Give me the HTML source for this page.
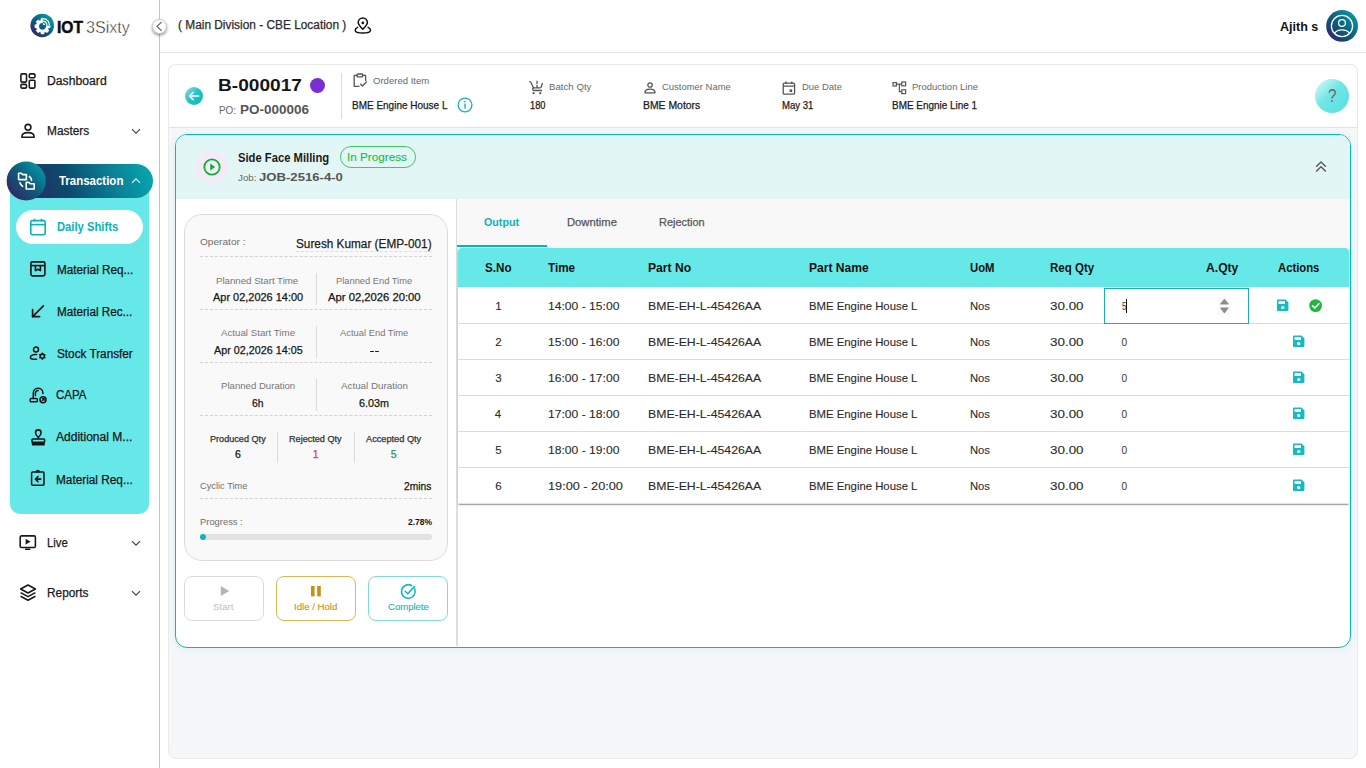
<!DOCTYPE html>
<html><head><meta charset="utf-8">
<style>
*{box-sizing:border-box;margin:0;padding:0}
html,body{width:1366px;height:768px;overflow:hidden;background:#fff;font-family:"Liberation Sans",sans-serif;color:#1a1a1a}
.a{position:absolute}
.t{position:absolute;white-space:nowrap;line-height:1;transform-origin:0 0}
svg.i{position:absolute;overflow:visible}
.dash{position:absolute;height:0;border-top:1px dashed #d2d2d2}
.vd{position:absolute;width:1px;background:#dadada}
.row{position:absolute;left:458px;width:891px;height:36px;border-bottom:1px solid #dcdcdc;background:#fff}
.sv{position:absolute;width:12px;height:12px}
</style></head>
<body>
<!-- ===== SIDEBAR ===== -->
<div class="a" style="left:159px;top:0;width:1px;height:768px;background:#c4c4c4"></div>
<div class="a" style="left:160px;top:52px;width:1206px;height:1px;background:#e4e4e4"></div>
<!-- logo -->
<svg class="i" style="left:0;top:0" width="160" height="52" viewBox="0 0 160 52">
 <defs><linearGradient id="lg1" gradientUnits="userSpaceOnUse" x1="52" y1="14" x2="33" y2="37"><stop offset="0" stop-color="#0aa7ad"/><stop offset="0.5" stop-color="#0b6282"/><stop offset="1" stop-color="#3e1a5e"/></linearGradient></defs>
 <circle cx="42.2" cy="25.5" r="11.8" fill="url(#lg1)"/>
 <path d="M48.07 24.07 L50.36 24.79 L50.36 27.81 L48.07 28.53 L48.01 28.67 L49.12 30.79 L46.99 32.92 L44.87 31.81 L44.73 31.87 L44.01 34.16 L40.99 34.16 L40.27 31.87 L40.13 31.81 L38.01 32.92 L35.88 30.79 L36.99 28.67 L36.93 28.53 L34.64 27.81 L34.64 24.79 L36.93 24.07 L36.99 23.93 L35.88 21.81 L38.01 19.68 L40.13 20.79 L40.27 20.73 L40.99 18.44 L44.01 18.44 L44.73 20.73 L44.87 20.79 L46.99 19.68 L49.12 21.81 L48.01 23.93Z" fill="#fff"/>
 <circle cx="42.5" cy="26.3" r="3.4" fill="#0b6282"/>
 <clipPath id="cp1"><circle cx="42.2" cy="25.5" r="11.6"/></clipPath><rect x="42.6" y="16" width="9.6" height="9.4" fill="url(#lg1)" clip-path="url(#cp1)"/>
 <g fill="none" stroke="#fff" stroke-width="1.25">
  <path d="M43 18.6 a6.4 6.4 0 0 1 6.4 6.4"/><path d="M43 21.2 a3.8 3.8 0 0 1 3.8 3.8"/>
 </g>
 <path d="M43 25 L43 23 A2 2 0 0 1 45 25z" fill="#fff"/>
 <rect x="41.3" y="17.8" width="1.3" height="5" fill="#fff"/>
</svg>
<!-- collapse btn -->
<div class="a" style="left:151.6px;top:18.6px;width:15px;height:15px;border-radius:50%;background:#fff;border:1px solid #c9c9c9;box-shadow:0 1.5px 3px rgba(0,0,0,.4)"></div>
<svg class="i" style="left:151.6px;top:18.6px" width="15" height="15" viewBox="0 0 15 15"><path d="M9.2 3.4 L5 7.4 L9.2 11.4" fill="none" stroke="#4a6680" stroke-width="1.3" stroke-linecap="round" stroke-linejoin="round"/></svg>
<!-- location icon -->
<svg class="i" style="left:354px;top:17px" width="18" height="18" viewBox="0 0 18 18">
 <g fill="none" stroke="#111" stroke-width="1.5" stroke-linecap="round" stroke-linejoin="round">
  <path d="M8.8 12.3 C6 9.6 4.2 7.6 4.2 5.6 A4.6 4.6 0 0 1 13.4 5.6 C13.4 7.6 11.6 9.6 8.8 12.3z"/>
  <path d="M3.6 10.4 C1.8 11.1 1.2 12.2 1.2 13.2 C1.2 15 4.6 16 8.8 16 C13 16 16.5 15 16.5 13.2 C16.5 12.2 15.9 11.1 14.1 10.4"/>
 </g>
 <circle cx="8.8" cy="5.9" r="1.3" fill="#111"/>
</svg>
<!-- avatar -->
<svg class="i" style="left:1326px;top:10px" width="32" height="32" viewBox="0 0 32 32">
 <defs><linearGradient id="lg2" x1="1" y1="0" x2="0" y2="1"><stop offset="0" stop-color="#0aa7ad"/><stop offset="0.55" stop-color="#0b5a7c"/><stop offset="1" stop-color="#3e1a5e"/></linearGradient></defs>
 <circle cx="16.1" cy="15.9" r="15.9" fill="url(#lg2)"/>
 <g fill="none" stroke="#fff" stroke-width="1.3">
  <circle cx="16" cy="16" r="10.6"/>
  <circle cx="16" cy="13" r="3.4"/>
  <path d="M8.4 23.4 C10 21 12.8 19.8 16 19.8 C19.2 19.8 22 21 23.6 23.4"/>
 </g>
</svg>

<!-- sidebar icons -->
<svg class="i" style="left:20px;top:73px" width="16" height="16" viewBox="0 0 16 16">
 <g fill="none" stroke="#1a1a1a" stroke-width="1.6">
  <rect x="0.9" y="0.9" width="5.6" height="8.2" rx="1"/><rect x="0.9" y="11.4" width="5.6" height="3.7" rx="1"/>
  <rect x="9.3" y="0.9" width="5.6" height="3.9" rx="1"/><rect x="9.3" y="7.2" width="5.6" height="7.9" rx="1"/>
 </g>
</svg>
<svg class="i" style="left:20px;top:123px" width="16" height="16" viewBox="0 0 16 16">
 <g fill="none" stroke="#1a1a1a" stroke-width="1.6">
  <circle cx="8" cy="4.3" r="2.9"/>
  <path d="M1.9 13.6 C1.9 10.9 4.6 9.6 8 9.6 C11.4 9.6 14.1 10.9 14.1 13.6 L14.1 14.2 L1.9 14.2z" stroke-linejoin="round"/>
 </g>
</svg>
<svg class="i" style="left:131px;top:128px" width="10" height="7" viewBox="0 0 10 7"><path d="M1 1.2 L5 5.2 L9 1.2" fill="none" stroke="#444" stroke-width="1.2"/></svg>
<!-- teal panel -->
<div class="a" style="left:10px;top:180px;width:139px;height:334px;background:#67e8e8;border-radius:0 0 10px 10px"></div>
<!-- transaction pill -->
<div class="a" style="left:10px;top:164px;width:143px;height:34px;border-radius:17px;background:linear-gradient(70deg,#3a1e5c 0%,#0b4a6e 40%,#0a7f95 70%,#07aab0 100%)"></div>
<svg class="i" style="left:6px;top:161px" width="40" height="40" viewBox="0 0 40 40">
 <defs><linearGradient id="lg3" x1="1" y1="0" x2="0" y2="1"><stop offset="0" stop-color="#06aab0"/><stop offset="0.45" stop-color="#0b6282"/><stop offset="1" stop-color="#3a1a5a"/></linearGradient></defs>
 <circle cx="20.2" cy="20" r="19.6" fill="url(#lg3)"/>
 <g fill="none" stroke="#fff" stroke-width="1.6" stroke-linejoin="round">
  <path d="M12.6 12.2 L15.4 12.2 L16.6 13.6 L20.4 13.6 L20.4 18.6 L12.6 18.6z"/>
  <path d="M20.2 21.4 L23 21.4 L24.2 22.8 L28.2 22.8 L28.2 28 L20.2 28z"/>
  <path d="M23.4 15.4 A6 6 0 0 1 25.6 19.4" stroke-linecap="round"/>
  <path d="M14 21.8 A6 6 0 0 0 16.6 25.4" stroke-linecap="round"/>
 </g>
</svg>
<svg class="i" style="left:131px;top:177px" width="10" height="7" viewBox="0 0 10 7"><path d="M1 5.8 L5 1.8 L9 5.8" fill="none" stroke="#d8f4f6" stroke-width="1.2"/></svg>
<!-- daily shifts pill -->
<div class="a" style="left:16px;top:210px;width:127px;height:34px;border-radius:17px;background:#fff"></div>
<svg class="i" style="left:29px;top:218px" width="18" height="18" viewBox="0 0 18 18">
 <g fill="none" stroke="#08b3bb" stroke-width="1.6">
  <rect x="1.8" y="2.6" width="14.4" height="14.2" rx="1.6"/><path d="M1.8 6.6 L16.2 6.6"/><path d="M5.6 0.8 L5.6 3.6 M12.4 0.8 L12.4 3.6"/>
 </g>
</svg>
<!-- sub icons -->
<svg class="i" style="left:30px;top:261px" width="16" height="16" viewBox="0 0 16 16">
 <g fill="none" stroke="#151515" stroke-width="1.6" stroke-linejoin="round">
  <rect x="0.9" y="0.9" width="14" height="14" rx="1.6"/><path d="M0.9 4.6 L14.9 4.6"/><path d="M5.4 4.6 L5.4 9.6 L7.9 8.2 L10.4 9.6 L10.4 4.6"/>
 </g>
</svg>
<svg class="i" style="left:31px;top:305px" width="14" height="13" viewBox="0 0 14 13">
 <g fill="none" stroke="#151515" stroke-width="1.7" stroke-linecap="round" stroke-linejoin="round">
  <path d="M12.4 0.9 L1.6 11.6"/><path d="M1.6 4.6 L1.6 11.6 L8.6 11.6"/>
 </g>
</svg>
<svg class="i" style="left:29px;top:346px" width="18" height="15" viewBox="0 0 18 15">
 <g fill="none" stroke="#151515" stroke-width="1.5" stroke-linecap="round" stroke-linejoin="round">
  <circle cx="7" cy="3.6" r="2.5"/><path d="M7.6 8.5 L6 8.5 Q1.4 9.2 1.4 11.2 Q1.4 13.2 4.4 13.2 L7.6 13.2"/>
 </g>
 <path d="M13.30 6.20 L14.65 7.86 L16.76 8.20 L16.00 10.20 L16.76 12.20 L14.65 12.54 L13.30 14.20 L11.95 12.54 L9.84 12.20 L10.60 10.20 L9.84 8.20 L11.95 7.86Z M14.60 10.20 A1.3 1.3 0 1 0 12.00 10.20 A1.3 1.3 0 1 0 14.60 10.20Z" fill="#151515" fill-rule="evenodd"/>
</svg>
<svg class="i" style="left:29px;top:387px" width="19" height="17" viewBox="0 0 19 17">
 <g fill="none" stroke="#151515" stroke-width="1.5" stroke-linecap="round" stroke-linejoin="round">
  <path d="M4.3 11 L4.3 6 A4.8 4.8 0 0 1 13.9 6 L13.9 6.4"/><path d="M6.4 8.6 L6.4 6.2 A2.7 2.7 0 0 1 9.1 3.5"/>
  <rect x="1.2" y="11.5" width="7.1" height="3.2" rx="0.8"/>
  <circle cx="14" cy="12.8" r="3"/>
 </g>
 <path d="M12.7 14.1 L15.2 11.6 M13.3 11.6 L15.2 11.6 L15.2 13.5" fill="none" stroke="#151515" stroke-width="1.1" stroke-linecap="round"/>
</svg>
<svg class="i" style="left:31px;top:429px" width="15" height="17" viewBox="0 0 15 17">
 <g fill="none" stroke="#151515" stroke-width="1.6" stroke-linejoin="round">
  <path d="M7.3 8.4 C3.4 5.4 3.8 0.9 7.3 0.9 C10.8 0.9 11.2 5.4 7.3 8.4z"/><path d="M7.3 8.4 L7.3 9.6"/><rect x="1" y="10" width="12.6" height="3.4" rx="0.8"/>
 </g>
 <rect x="0.8" y="14" width="13" height="2.4" rx="0.6" fill="#151515"/>
</svg>
<svg class="i" style="left:30px;top:469px" width="16" height="18" viewBox="0 0 16 18">
 <g fill="none" stroke="#151515" stroke-width="1.5" stroke-linejoin="round" stroke-linecap="round">
  <rect x="1.6" y="2.9" width="12.4" height="13.3" rx="1"/><path d="M6.5 2.9 A1.3 1.3 0 0 1 9.1 2.9"/>
  <path d="M10.8 10.1 L5.6 10.1 M8 7.6 L5.4 10.1 L8 12.6" stroke-width="1.6"/>
 </g>
</svg>
<!-- live / reports -->
<svg class="i" style="left:19px;top:535px" width="18" height="16" viewBox="0 0 18 16">
 <rect x="1.2" y="0.9" width="15.2" height="11.6" rx="1.3" fill="none" stroke="#1a1a1a" stroke-width="1.6"/>
 <path d="M6.6 3.8 L11.6 6.7 L6.6 9.6z" fill="#1a1a1a"/><rect x="6" y="13.4" width="5.4" height="1.7" rx="0.5" fill="#1a1a1a"/>
</svg>
<svg class="i" style="left:131px;top:540px" width="10" height="7" viewBox="0 0 10 7"><path d="M1 1.2 L5 5.2 L9 1.2" fill="none" stroke="#444" stroke-width="1.2"/></svg>
<svg class="i" style="left:19px;top:584px" width="18" height="18" viewBox="0 0 18 18">
 <g fill="none" stroke="#1a1a1a" stroke-width="1.6" stroke-linejoin="round">
  <path d="M9 1 L16.4 5 L9 9 L1.6 5z"/><path d="M1.6 8.6 L9 12.6 L16.4 8.6"/><path d="M1.6 12.2 L9 16.2 L16.4 12.2"/>
 </g>
</svg>
<svg class="i" style="left:131px;top:590px" width="10" height="7" viewBox="0 0 10 7"><path d="M1 1.2 L5 5.2 L9 1.2" fill="none" stroke="#444" stroke-width="1.2"/></svg>

<!-- ===== MAIN ===== -->
<div class="a" style="left:168px;top:64px;width:1190px;height:695px;background:#f5f7f9;border:1px solid #eaeaea;border-radius:8px"></div>
<div class="a" style="left:168px;top:64px;width:1190px;height:64px;background:#fff;border:1px solid #eaeaea;border-bottom-color:#e2e2e2;border-radius:8px 8px 0 0"></div>
<!-- back -->
<svg class="i" style="left:184px;top:86px" width="20" height="20" viewBox="0 0 20 20">
 <defs><linearGradient id="lg4" x1="0" y1="0" x2="1" y2="1"><stop offset="0" stop-color="#80e2e4"/><stop offset="0.5" stop-color="#22c3c7"/><stop offset="1" stop-color="#0cb8bc"/></linearGradient></defs>
 <circle cx="10" cy="10" r="9" fill="url(#lg4)"/>
 <path d="M14.6 10 L5.6 10 M9.2 6.4 L5.6 10 L9.2 13.6" fill="none" stroke="#fff" stroke-width="1.7" stroke-linecap="round" stroke-linejoin="round"/>
</svg>
<div class="a" style="left:310px;top:77.5px;width:15px;height:15px;border-radius:50%;background:#7a2fd5"></div>
<div class="a" style="left:341px;top:73px;width:1px;height:46px;background:#dedede"></div>
<!-- ordered item icon -->
<svg class="i" style="left:353px;top:73px" width="15" height="15" viewBox="0 0 15 15">
 <g fill="none" stroke="#555" stroke-width="1.3" stroke-linejoin="round" stroke-linecap="round">
  <path d="M4 2.4 L1.2 2.4 L1.2 13.4 L6 13.4"/><path d="M9.6 2.4 L12.6 2.4 L12.6 7.6"/><rect x="4" y="1" width="5.6" height="2.8" rx="0.6"/><path d="M7.6 11.2 L9.4 13 L13.4 9"/>
 </g>
</svg>
<svg class="i" style="left:457px;top:97px" width="16" height="16" viewBox="0 0 16 16">
 <circle cx="8" cy="8" r="6.9" fill="none" stroke="#17b0b8" stroke-width="1.3"/>
 <rect x="7.3" y="6.6" width="1.4" height="5" fill="#17b0b8"/><circle cx="8" cy="4.6" r="0.9" fill="#17b0b8"/>
</svg>
<!-- cart -->
<svg class="i" style="left:529px;top:80px" width="15" height="15" viewBox="0 0 15 15">
 <g fill="none" stroke="#555" stroke-width="1.3" stroke-linecap="round" stroke-linejoin="round">
  <path d="M0.8 1.6 Q1.7 1.7 2.3 3.2 L4.4 7.8"/><path d="M4.4 7.8 L11.2 7.8 Q12 7.8 12.3 6.8 L13.3 3.4"/>
  <path d="M4.4 7.8 Q3.6 8.4 3.8 9.6 Q4 10.5 5 10.5 L12.6 10.5"/><path d="M8 1.2 L8 3.6 M8 5.3 L8 7.4"/>
 </g>
 <circle cx="4.5" cy="13.2" r="1.1" fill="#555"/><circle cx="11.3" cy="13.2" r="1.1" fill="#555"/>
</svg>
<!-- person -->
<svg class="i" style="left:644px;top:82px" width="12" height="12" viewBox="0 0 12 12">
 <g fill="none" stroke="#555" stroke-width="1.3">
  <circle cx="6" cy="3" r="2.2"/><path d="M1 10.4 C1 8.2 3 7.2 6 7.2 C9 7.2 11 8.2 11 10.4 L11 10.8 L1 10.8z" stroke-linejoin="round"/>
 </g>
</svg>
<!-- calendar -->
<svg class="i" style="left:782px;top:81px" width="14" height="14" viewBox="0 0 14 14">
 <g fill="none" stroke="#555" stroke-width="1.3">
  <rect x="1.2" y="2.2" width="11.4" height="11" rx="1.2"/><path d="M1.2 5.2 L12.6 5.2 M4 0.6 L4 3 M9.8 0.6 L9.8 3"/>
 </g>
 <rect x="7.6" y="8.4" width="2.6" height="2.6" fill="#555"/>
</svg>
<!-- production line -->
<svg class="i" style="left:892px;top:81px" width="15" height="14" viewBox="0 0 15 14">
 <g fill="none" stroke="#555" stroke-width="1.2">
  <rect x="1" y="1.6" width="3.4" height="3.4"/><rect x="9.8" y="1" width="3.8" height="3.8"/><rect x="9.8" y="8.8" width="3.8" height="3.8"/><path d="M4.4 3.2 L9.8 3.2 M7.4 3.2 L7.4 10.6 L9.8 10.6"/>
 </g>
</svg>
<!-- help -->
<svg class="i" style="left:1315px;top:79px" width="34" height="34" viewBox="0 0 34 34">
 <defs><linearGradient id="lg5" x1="0" y1="0" x2="1" y2="1"><stop offset="0" stop-color="#e6fafa"/><stop offset="0.45" stop-color="#6fe6e6"/><stop offset="1" stop-color="#58dfe0"/></linearGradient></defs>
 <circle cx="17" cy="17" r="17" fill="url(#lg5)"/>
</svg>

<!-- ===== JOB SECTION ===== -->
<div class="a" style="left:175px;top:134px;width:1176px;height:514px;background:#fff;border:1.5px solid #02bbbe;border-radius:12px;overflow:hidden;box-shadow:0 1px 8px rgba(0,150,160,.09)">
  <div class="a" style="left:0;top:0;width:1176px;height:64px;background:#e3f6f6"></div>
</div>
<div class="a" style="left:456px;top:199px;width:2px;height:447px;background:#dedede"></div>
<div class="a" style="left:457px;top:199px;width:892px;height:49px;background:#f8f8f8"></div>
<div class="a" style="left:457px;top:245px;width:90px;height:2px;background:#00b8bc"></div>
<!-- play icon -->
<div class="a" style="left:196px;top:151px;width:32px;height:32px;border-radius:50%;background:#f5e9fa"></div>
<svg class="i" style="left:203px;top:158px" width="18" height="18" viewBox="0 0 18 18">
 <circle cx="9" cy="9" r="7.7" fill="none" stroke="#08b52c" stroke-width="1.8"/><path d="M7.2 5.6 L12.2 9 L7.2 12.4z" fill="#08b52c"/>
</svg>
<div class="a" style="left:340px;top:146px;width:76px;height:22px;border:1px solid #3fc962;border-radius:11px"></div>
<svg class="i" style="left:1314px;top:160px" width="14" height="14" viewBox="0 0 14 14">
 <g fill="none" stroke="#555" stroke-width="1.4" stroke-linecap="round" stroke-linejoin="round"><path d="M2.6 6.2 L7 2 L11.4 6.2"/><path d="M2.6 11 L7 6.8 L11.4 11"/></g>
</svg>
<!-- inner card -->
<div class="a" style="left:184px;top:214px;width:264px;height:347px;background:#f9f9f9;border:1px solid #dcdcdc;border-radius:18px"></div>
<div class="dash" style="left:296px;top:251px;width:136px;border-top-color:#dddddd"></div>
<div class="dash" style="left:200px;top:256px;width:232px"></div>
<div class="dash" style="left:200px;top:309px;width:232px"></div>
<div class="dash" style="left:200px;top:362px;width:232px"></div>
<div class="dash" style="left:200px;top:415px;width:232px"></div>
<div class="dash" style="left:200px;top:498px;width:232px"></div>
<div class="vd" style="left:316px;top:273px;height:32px"></div>
<div class="vd" style="left:316px;top:326px;height:32px"></div>
<div class="vd" style="left:316px;top:379px;height:32px"></div>
<div class="vd" style="left:277px;top:432px;height:31px"></div>
<div class="vd" style="left:354px;top:432px;height:31px"></div>
<div class="a" style="left:369.8px;top:350.7px;width:4.1px;height:1.4px;background:#1a1a1a;border-radius:.7px"></div><div class="a" style="left:374.9px;top:350.7px;width:4.1px;height:1.4px;background:#1a1a1a;border-radius:.7px"></div>
<div class="a" style="left:200px;top:534px;width:232px;height:6px;border-radius:3px;background:#e2e2e2"></div>
<div class="a" style="left:199.8px;top:533.6px;width:6.4px;height:6.4px;border-radius:50%;background:#10b5bb"></div>
<!-- buttons -->
<div class="a" style="left:184px;top:576px;width:80px;height:45px;border:1px solid #dcdcdc;border-radius:8px;background:#fff"></div>
<div class="a" style="left:276px;top:576px;width:80px;height:45px;border:1px solid #e3b550;border-radius:8px;background:#fff"></div>
<div class="a" style="left:368px;top:576px;width:80px;height:45px;border:1px solid #7cdbe0;border-radius:8px;background:#fff"></div>
<svg class="i" style="left:220px;top:585px" width="10" height="12" viewBox="0 0 10 12"><path d="M0.8 0.9 L9.2 6 L0.8 11.1z" fill="#b5b5b5"/></svg>
<svg class="i" style="left:311px;top:586px" width="10" height="11" viewBox="0 0 10 11"><rect x="0" y="0" width="3.6" height="10.4" fill="#c8920e"/><rect x="6.2" y="0" width="3.6" height="10.4" fill="#c8920e"/></svg>
<svg class="i" style="left:400px;top:583px" width="17" height="17" viewBox="0 0 17 17">
 <g fill="none" stroke="#0fb8bf" stroke-width="1.55" stroke-linecap="round" stroke-linejoin="round"><path d="M14.6 5.8 A6.8 6.8 0 1 1 11.8 2.6"/><path d="M5.2 8.2 L7.8 10.8 L14.4 3.6"/></g>
</svg>

<!-- ===== TABLE ===== -->
<div class="a" style="left:458px;top:248px;width:891px;height:256px;background:#fff;border-radius:4px 4px 0 0;box-shadow:0 2px 1px -1px rgba(0,0,0,.2),0 1px 1px 0 rgba(0,0,0,.14),0 1px 3px 0 rgba(0,0,0,.12)"></div>
<div class="a" style="left:458px;top:248px;width:891px;height:39px;background:#67e8e8;border-radius:4px 4px 0 0"></div>
<div class="row" style="top:287px;height:37px"></div>
<div class="row" style="top:324px"></div>
<div class="row" style="top:360px"></div>
<div class="row" style="top:396px"></div>
<div class="row" style="top:432px"></div>
<div class="row" style="top:468px;border-bottom-color:#e4e4e4"></div>
<!-- input -->
<div class="a" style="left:1104px;top:288px;width:145px;height:36px;border:1.5px solid #17aeb6;background:#fff"></div>
<div class="a" style="left:1126px;top:299px;width:1px;height:14px;background:#111"></div>
<div class="a" style="left:1217px;top:297px;width:14px;height:18px;background:#fafafa"></div>
<svg class="i" style="left:1218px;top:298px" width="12" height="16" viewBox="0 0 12 16"><path d="M6.4 1.6 L10 6 L2.8 6z M6.4 14.6 L10 10 L2.8 10z" fill="#8c8c8c" stroke="#8c8c8c" stroke-width="1.2" stroke-linejoin="round"/></svg>
<!-- action icons -->
<svg class="i" style="left:1276px;top:299px" width="13" height="13" viewBox="0 0 13 13" id="fl"><path d="M1 1.6 Q1 0.6 2 0.6 L9.6 0.6 L12.4 3.4 L12.4 11 Q12.4 12 11.4 12 L2 12 Q1 12 1 11z" fill="#12bcc3"/><rect x="2.6" y="2" width="6.4" height="3" fill="#fff"/><circle cx="6.7" cy="8.6" r="1.7" fill="#fff"/></svg>
<svg class="i" style="left:1309px;top:299px" width="14" height="14" viewBox="0 0 14 14"><circle cx="6.6" cy="6.6" r="6.4" fill="#1db83c"/><path d="M3.6 6.8 L5.8 9 L9.8 4.8" fill="none" stroke="#fff" stroke-width="1.7" stroke-linecap="round" stroke-linejoin="round"/></svg>
<svg class="i" style="left:1292px;top:335px" width="13" height="13" viewBox="0 0 13 13"><path d="M1 1.6 Q1 0.6 2 0.6 L9.6 0.6 L12.4 3.4 L12.4 11 Q12.4 12 11.4 12 L2 12 Q1 12 1 11z" fill="#12bcc3"/><rect x="2.6" y="2" width="6.4" height="3" fill="#fff"/><circle cx="6.7" cy="8.6" r="1.7" fill="#fff"/></svg>
<svg class="i" style="left:1292px;top:371px" width="13" height="13" viewBox="0 0 13 13"><path d="M1 1.6 Q1 0.6 2 0.6 L9.6 0.6 L12.4 3.4 L12.4 11 Q12.4 12 11.4 12 L2 12 Q1 12 1 11z" fill="#12bcc3"/><rect x="2.6" y="2" width="6.4" height="3" fill="#fff"/><circle cx="6.7" cy="8.6" r="1.7" fill="#fff"/></svg>
<svg class="i" style="left:1292px;top:407px" width="13" height="13" viewBox="0 0 13 13"><path d="M1 1.6 Q1 0.6 2 0.6 L9.6 0.6 L12.4 3.4 L12.4 11 Q12.4 12 11.4 12 L2 12 Q1 12 1 11z" fill="#12bcc3"/><rect x="2.6" y="2" width="6.4" height="3" fill="#fff"/><circle cx="6.7" cy="8.6" r="1.7" fill="#fff"/></svg>
<svg class="i" style="left:1292px;top:443px" width="13" height="13" viewBox="0 0 13 13"><path d="M1 1.6 Q1 0.6 2 0.6 L9.6 0.6 L12.4 3.4 L12.4 11 Q12.4 12 11.4 12 L2 12 Q1 12 1 11z" fill="#12bcc3"/><rect x="2.6" y="2" width="6.4" height="3" fill="#fff"/><circle cx="6.7" cy="8.6" r="1.7" fill="#fff"/></svg>
<svg class="i" style="left:1292px;top:479px" width="13" height="13" viewBox="0 0 13 13"><path d="M1 1.6 Q1 0.6 2 0.6 L9.6 0.6 L12.4 3.4 L12.4 11 Q12.4 12 11.4 12 L2 12 Q1 12 1 11z" fill="#12bcc3"/><rect x="2.6" y="2" width="6.4" height="3" fill="#fff"/><circle cx="6.7" cy="8.6" r="1.7" fill="#fff"/></svg>
<div class="t" style="left:57.28px;top:18.91px;font-size:17px;color:#0d0d0d;font-weight:700;transform:scaleX(0.9160);-webkit-text-stroke:0.5px currentColor;">IOT</div>
<div class="t" style="left:85.70px;top:18.57px;font-size:17.4px;color:#1a1a1a;transform:scaleX(0.9232);-webkit-text-stroke:0.45px #fff;">3Sixty</div>
<div class="t" style="left:177.70px;top:19.04px;font-size:12px;color:#2b2b2b;transform:scaleX(0.9896);-webkit-text-stroke:0.25px currentColor;">( Main Division - CBE Location )</div>
<div class="t" style="left:1279.70px;top:19.80px;font-size:13px;color:#111;font-weight:700;transform:scaleX(0.9622);">Ajith s</div>
<div class="t" style="left:46.60px;top:74.84px;font-size:12px;color:#1a1a1a;transform:scaleX(1.0167);-webkit-text-stroke:0.25px currentColor;">Dashboard</div>
<div class="t" style="left:46.60px;top:124.64px;font-size:12px;color:#1a1a1a;transform:scaleX(0.9889);-webkit-text-stroke:0.25px currentColor;">Masters</div>
<div class="t" style="left:58.60px;top:174.62px;font-size:12.5px;color:#ffffff;font-weight:700;transform:scaleX(0.9177);">Transaction</div>
<div class="t" style="left:56.60px;top:221.42px;font-size:12.5px;color:#08b3bb;font-weight:700;transform:scaleX(0.8984);">Daily Shifts</div>
<div class="t" style="left:56.70px;top:263.74px;font-size:12px;color:#151515;transform:scaleX(0.9782);-webkit-text-stroke:0.25px currentColor;">Material Req...</div>
<div class="t" style="left:56.70px;top:305.84px;font-size:12px;color:#151515;transform:scaleX(0.9738);-webkit-text-stroke:0.25px currentColor;">Material Rec...</div>
<div class="t" style="left:56.70px;top:347.64px;font-size:12px;color:#151515;transform:scaleX(0.9796);-webkit-text-stroke:0.25px currentColor;">Stock Transfer</div>
<div class="t" style="left:56.20px;top:389.34px;font-size:12px;color:#151515;transform:scaleX(0.9565);-webkit-text-stroke:0.25px currentColor;">CAPA</div>
<div class="t" style="left:56.20px;top:431.34px;font-size:12px;color:#151515;transform:scaleX(1.0039);-webkit-text-stroke:0.25px currentColor;">Additional M...</div>
<div class="t" style="left:56.20px;top:473.74px;font-size:12px;color:#151515;transform:scaleX(0.9833);-webkit-text-stroke:0.25px currentColor;">Material Req...</div>
<div class="t" style="left:46.50px;top:536.94px;font-size:12px;color:#1a1a1a;transform:scaleX(0.9400);-webkit-text-stroke:0.25px currentColor;">Live</div>
<div class="t" style="left:46.50px;top:587.04px;font-size:12px;color:#1a1a1a;transform:scaleX(0.9877);-webkit-text-stroke:0.25px currentColor;">Reports</div>
<div class="t" style="left:218.04px;top:76.63px;font-size:16.5px;color:#161616;font-weight:700;transform:scaleX(1.1586);">B-000017</div>
<div class="t" style="left:219.20px;top:104.89px;font-size:11px;color:#6a6a6a;transform:scaleX(0.8998);">PO:</div>
<div class="t" style="left:240.30px;top:103.62px;font-size:12.5px;color:#555;font-weight:700;transform:scaleX(1.0784);">PO-000006</div>
<div class="t" style="left:373.00px;top:76.46px;font-size:9.5px;color:#696969;transform:scaleX(1.0044);">Ordered Item</div>
<div class="t" style="left:352.40px;top:99.51px;font-size:10.5px;color:#1a1a1a;transform:scaleX(0.9508);-webkit-text-stroke:0.25px currentColor;">BME Engine House L</div>
<div class="t" style="left:549.00px;top:82.16px;font-size:9.5px;color:#696969;transform:scaleX(1.0176);">Batch Qty</div>
<div class="t" style="left:529.50px;top:100.11px;font-size:10.5px;color:#1a1a1a;transform:scaleX(0.8824);-webkit-text-stroke:0.25px currentColor;">180</div>
<div class="t" style="left:662.40px;top:82.16px;font-size:9.5px;color:#696969;transform:scaleX(0.9946);">Customer Name</div>
<div class="t" style="left:642.50px;top:100.11px;font-size:10.5px;color:#1a1a1a;transform:scaleX(0.9911);-webkit-text-stroke:0.25px currentColor;">BME Motors</div>
<div class="t" style="left:801.60px;top:82.16px;font-size:9.5px;color:#696969;transform:scaleX(0.9937);">Due Date</div>
<div class="t" style="left:782.00px;top:100.11px;font-size:10.5px;color:#1a1a1a;transform:scaleX(0.9135);-webkit-text-stroke:0.25px currentColor;">May 31</div>
<div class="t" style="left:912.00px;top:82.16px;font-size:9.5px;color:#696969;">Production Line</div>
<div class="t" style="left:891.80px;top:100.11px;font-size:10.5px;color:#1a1a1a;transform:scaleX(0.9461);-webkit-text-stroke:0.25px currentColor;">BME Engnie Line 1</div>
<div class="t" style="left:1327.75px;top:87.26px;font-size:18px;color:#666;transform:scaleX(0.8500);">?</div>
<div class="t" style="left:238.40px;top:152.24px;font-size:12px;color:#1a1a1a;font-weight:700;transform:scaleX(0.9359);">Side Face Milling</div>
<div class="t" style="left:347.38px;top:151.67px;font-size:11.5px;color:#12bf3c;transform:scaleX(1.0198);-webkit-text-stroke:0.1px currentColor;">In Progress</div>
<div class="t" style="left:238.40px;top:174.18px;font-size:9px;color:#6a6a6a;transform:scaleX(1.0902);">Job:</div>
<div class="t" style="left:258.70px;top:172.07px;font-size:11.5px;color:#555;font-weight:700;transform:scaleX(1.1407);">JOB-2516-4-0</div>
<div class="t" style="left:200.20px;top:237.16px;font-size:9.5px;color:#6e6e6e;transform:scaleX(1.0634);">Operator :</div>
<div class="t" style="left:296.40px;top:238.14px;font-size:12px;color:#1e1e1e;transform:scaleX(0.9822);-webkit-text-stroke:0.25px currentColor;">Suresh Kumar (EMP-001)</div>
<div class="t" style="left:216.40px;top:276.58px;font-size:9px;color:#777;transform:scaleX(1.0744);">Planned Start Time</div>
<div class="t" style="left:212.70px;top:292.39px;font-size:11px;color:#151515;transform:scaleX(0.9956);-webkit-text-stroke:0.25px currentColor;">Apr 02,2026 14:00</div>
<div class="t" style="left:336.05px;top:276.58px;font-size:9px;color:#777;transform:scaleX(1.0352);">Planned End Time</div>
<div class="t" style="left:328.15px;top:292.39px;font-size:11px;color:#151515;transform:scaleX(1.0232);-webkit-text-stroke:0.25px currentColor;">Apr 02,2026 20:00</div>
<div class="t" style="left:220.80px;top:329.18px;font-size:9px;color:#777;transform:scaleX(1.0804);">Actual Start Time</div>
<div class="t" style="left:213.50px;top:345.39px;font-size:11px;color:#151515;transform:scaleX(0.9790);-webkit-text-stroke:0.25px currentColor;">Apr 02,2026 14:05</div>
<div class="t" style="left:340.10px;top:329.18px;font-size:9px;color:#777;transform:scaleX(1.0428);">Actual End Time</div>
<div class="t" style="left:220.80px;top:382.38px;font-size:9px;color:#777;transform:scaleX(1.0670);">Planned Duration</div>
<div class="t" style="left:252.00px;top:398.29px;font-size:11px;color:#151515;transform:scaleX(0.9408);-webkit-text-stroke:0.25px currentColor;">6h</div>
<div class="t" style="left:340.70px;top:382.38px;font-size:9px;color:#777;transform:scaleX(1.0890);">Actual Duration</div>
<div class="t" style="left:359.20px;top:398.29px;font-size:11px;color:#151515;transform:scaleX(0.9800);-webkit-text-stroke:0.25px currentColor;">6.03m</div>
<div class="t" style="left:210.00px;top:434.68px;font-size:9px;color:#333;transform:scaleX(1.0121);-webkit-text-stroke:0.25px currentColor;">Produced Qty</div>
<div class="t" style="left:289.15px;top:434.68px;font-size:9px;color:#333;transform:scaleX(1.0110);-webkit-text-stroke:0.25px currentColor;">Rejected Qty</div>
<div class="t" style="left:365.85px;top:434.68px;font-size:9px;color:#333;transform:scaleX(1.0215);-webkit-text-stroke:0.25px currentColor;">Accepted Qty</div>
<div class="t" style="left:235.10px;top:449.11px;font-size:10.5px;color:#151515;-webkit-text-stroke:0.25px currentColor;">6</div>
<div class="t" style="left:312.80px;top:449.11px;font-size:10.5px;color:#e8336d;-webkit-text-stroke:0.25px currentColor;">1</div>
<div class="t" style="left:390.75px;top:449.11px;font-size:10.5px;color:#1f9a6a;-webkit-text-stroke:0.25px currentColor;">5</div>
<div class="t" style="left:200.20px;top:481.16px;font-size:9.5px;color:#6e6e6e;transform:scaleX(0.9763);">Cyclic Time</div>
<div class="t" style="left:404.20px;top:480.89px;font-size:11px;color:#151515;transform:scaleX(0.9316);-webkit-text-stroke:0.25px currentColor;">2mins</div>
<div class="t" style="left:200.20px;top:516.76px;font-size:9.5px;color:#6e6e6e;transform:scaleX(0.9870);">Progress :</div>
<div class="t" style="left:407.50px;top:516.96px;font-size:9.5px;color:#151515;font-weight:700;transform:scaleX(0.8912);">2.78%</div>
<div class="t" style="left:213.35px;top:602.78px;font-size:9px;color:#bdbdbd;transform:scaleX(1.0766);">Start</div>
<div class="t" style="left:294.10px;top:602.78px;font-size:9px;color:#c8920e;transform:scaleX(1.0687);-webkit-text-stroke:0.1px currentColor;">Idle / Hold</div>
<div class="t" style="left:387.60px;top:602.78px;font-size:9px;color:#1ab0b8;transform:scaleX(1.0594);-webkit-text-stroke:0.1px currentColor;">Complete</div>
<div class="t" style="left:484.40px;top:216.79px;font-size:11px;color:#08b3bb;font-weight:700;transform:scaleX(0.9704);">Output</div>
<div class="t" style="left:567.20px;top:216.79px;font-size:11px;color:#555;transform:scaleX(1.0208);-webkit-text-stroke:0.25px currentColor;">Downtime</div>
<div class="t" style="left:659.00px;top:216.79px;font-size:11px;color:#555;transform:scaleX(0.9947);-webkit-text-stroke:0.25px currentColor;">Rejection</div>
<div class="t" style="left:484.80px;top:262.14px;font-size:12px;color:#111;font-weight:700;transform:scaleX(0.9702);">S.No</div>
<div class="t" style="left:548.40px;top:262.14px;font-size:12px;color:#111;font-weight:700;transform:scaleX(0.9745);">Time</div>
<div class="t" style="left:648.40px;top:262.14px;font-size:12px;color:#111;font-weight:700;transform:scaleX(1.0108);">Part No</div>
<div class="t" style="left:809.00px;top:262.14px;font-size:12px;color:#111;font-weight:700;transform:scaleX(1.0052);">Part Name</div>
<div class="t" style="left:970.00px;top:262.14px;font-size:12px;color:#111;font-weight:700;transform:scaleX(0.9424);">UoM</div>
<div class="t" style="left:1050.00px;top:262.14px;font-size:12px;color:#111;font-weight:700;transform:scaleX(0.9604);">Req Qty</div>
<div class="t" style="left:1205.80px;top:262.14px;font-size:12px;color:#111;font-weight:700;transform:scaleX(1.0114);">A.Qty</div>
<div class="t" style="left:1278.00px;top:262.14px;font-size:12px;color:#111;font-weight:700;transform:scaleX(0.9407);">Actions</div>
<div class="t" style="left:495.20px;top:300.97px;font-size:11.5px;color:#2a2a2a;-webkit-text-stroke:0.1px currentColor;">1</div>
<div class="t" style="left:548.40px;top:300.97px;font-size:11.5px;color:#2a2a2a;transform:scaleX(1.0537);-webkit-text-stroke:0.1px currentColor;">14:00 - 15:00</div>
<div class="t" style="left:648.40px;top:300.97px;font-size:11.5px;color:#2a2a2a;transform:scaleX(1.0664);-webkit-text-stroke:0.1px currentColor;">BME-EH-L-45426AA</div>
<div class="t" style="left:809.00px;top:300.97px;font-size:11.5px;color:#2a2a2a;transform:scaleX(0.9859);-webkit-text-stroke:0.1px currentColor;">BME Engine House L</div>
<div class="t" style="left:970.00px;top:300.97px;font-size:11.5px;color:#2a2a2a;transform:scaleX(0.9758);-webkit-text-stroke:0.1px currentColor;">Nos</div>
<div class="t" style="left:1050.00px;top:300.97px;font-size:11.5px;color:#2a2a2a;transform:scaleX(1.1662);-webkit-text-stroke:0.1px currentColor;">30.00</div>
<div class="t" style="left:495.20px;top:336.97px;font-size:11.5px;color:#2a2a2a;-webkit-text-stroke:0.1px currentColor;">2</div>
<div class="t" style="left:548.40px;top:336.97px;font-size:11.5px;color:#2a2a2a;transform:scaleX(1.0537);-webkit-text-stroke:0.1px currentColor;">15:00 - 16:00</div>
<div class="t" style="left:648.40px;top:336.97px;font-size:11.5px;color:#2a2a2a;transform:scaleX(1.0664);-webkit-text-stroke:0.1px currentColor;">BME-EH-L-45426AA</div>
<div class="t" style="left:809.00px;top:336.97px;font-size:11.5px;color:#2a2a2a;transform:scaleX(0.9859);-webkit-text-stroke:0.1px currentColor;">BME Engine House L</div>
<div class="t" style="left:970.00px;top:336.97px;font-size:11.5px;color:#2a2a2a;transform:scaleX(0.9758);-webkit-text-stroke:0.1px currentColor;">Nos</div>
<div class="t" style="left:1050.00px;top:336.97px;font-size:11.5px;color:#2a2a2a;transform:scaleX(1.1662);-webkit-text-stroke:0.1px currentColor;">30.00</div>
<div class="t" style="left:1121.60px;top:338.24px;font-size:10px;color:#333;">0</div>
<div class="t" style="left:495.20px;top:372.97px;font-size:11.5px;color:#2a2a2a;-webkit-text-stroke:0.1px currentColor;">3</div>
<div class="t" style="left:548.40px;top:372.97px;font-size:11.5px;color:#2a2a2a;transform:scaleX(1.0537);-webkit-text-stroke:0.1px currentColor;">16:00 - 17:00</div>
<div class="t" style="left:648.40px;top:372.97px;font-size:11.5px;color:#2a2a2a;transform:scaleX(1.0664);-webkit-text-stroke:0.1px currentColor;">BME-EH-L-45426AA</div>
<div class="t" style="left:809.00px;top:372.97px;font-size:11.5px;color:#2a2a2a;transform:scaleX(0.9859);-webkit-text-stroke:0.1px currentColor;">BME Engine House L</div>
<div class="t" style="left:970.00px;top:372.97px;font-size:11.5px;color:#2a2a2a;transform:scaleX(0.9758);-webkit-text-stroke:0.1px currentColor;">Nos</div>
<div class="t" style="left:1050.00px;top:372.97px;font-size:11.5px;color:#2a2a2a;transform:scaleX(1.1662);-webkit-text-stroke:0.1px currentColor;">30.00</div>
<div class="t" style="left:1121.60px;top:374.24px;font-size:10px;color:#333;">0</div>
<div class="t" style="left:494.70px;top:408.97px;font-size:11.5px;color:#2a2a2a;-webkit-text-stroke:0.1px currentColor;">4</div>
<div class="t" style="left:548.40px;top:408.97px;font-size:11.5px;color:#2a2a2a;transform:scaleX(1.0537);-webkit-text-stroke:0.1px currentColor;">17:00 - 18:00</div>
<div class="t" style="left:648.40px;top:408.97px;font-size:11.5px;color:#2a2a2a;transform:scaleX(1.0664);-webkit-text-stroke:0.1px currentColor;">BME-EH-L-45426AA</div>
<div class="t" style="left:809.00px;top:408.97px;font-size:11.5px;color:#2a2a2a;transform:scaleX(0.9859);-webkit-text-stroke:0.1px currentColor;">BME Engine House L</div>
<div class="t" style="left:970.00px;top:408.97px;font-size:11.5px;color:#2a2a2a;transform:scaleX(0.9758);-webkit-text-stroke:0.1px currentColor;">Nos</div>
<div class="t" style="left:1050.00px;top:408.97px;font-size:11.5px;color:#2a2a2a;transform:scaleX(1.1662);-webkit-text-stroke:0.1px currentColor;">30.00</div>
<div class="t" style="left:1121.60px;top:410.24px;font-size:10px;color:#333;">0</div>
<div class="t" style="left:495.20px;top:444.97px;font-size:11.5px;color:#2a2a2a;-webkit-text-stroke:0.1px currentColor;">5</div>
<div class="t" style="left:548.40px;top:444.97px;font-size:11.5px;color:#2a2a2a;transform:scaleX(1.0537);-webkit-text-stroke:0.1px currentColor;">18:00 - 19:00</div>
<div class="t" style="left:648.40px;top:444.97px;font-size:11.5px;color:#2a2a2a;transform:scaleX(1.0664);-webkit-text-stroke:0.1px currentColor;">BME-EH-L-45426AA</div>
<div class="t" style="left:809.00px;top:444.97px;font-size:11.5px;color:#2a2a2a;transform:scaleX(0.9859);-webkit-text-stroke:0.1px currentColor;">BME Engine House L</div>
<div class="t" style="left:970.00px;top:444.97px;font-size:11.5px;color:#2a2a2a;transform:scaleX(0.9758);-webkit-text-stroke:0.1px currentColor;">Nos</div>
<div class="t" style="left:1050.00px;top:444.97px;font-size:11.5px;color:#2a2a2a;transform:scaleX(1.1662);-webkit-text-stroke:0.1px currentColor;">30.00</div>
<div class="t" style="left:1121.60px;top:446.24px;font-size:10px;color:#333;">0</div>
<div class="t" style="left:495.20px;top:480.97px;font-size:11.5px;color:#2a2a2a;-webkit-text-stroke:0.1px currentColor;">6</div>
<div class="t" style="left:548.40px;top:480.97px;font-size:11.5px;color:#2a2a2a;transform:scaleX(1.1057);-webkit-text-stroke:0.1px currentColor;">19:00 - 20:00</div>
<div class="t" style="left:648.40px;top:480.97px;font-size:11.5px;color:#2a2a2a;transform:scaleX(1.0664);-webkit-text-stroke:0.1px currentColor;">BME-EH-L-45426AA</div>
<div class="t" style="left:809.00px;top:480.97px;font-size:11.5px;color:#2a2a2a;transform:scaleX(0.9859);-webkit-text-stroke:0.1px currentColor;">BME Engine House L</div>
<div class="t" style="left:970.00px;top:480.97px;font-size:11.5px;color:#2a2a2a;transform:scaleX(0.9758);-webkit-text-stroke:0.1px currentColor;">Nos</div>
<div class="t" style="left:1050.00px;top:480.97px;font-size:11.5px;color:#2a2a2a;transform:scaleX(1.1662);-webkit-text-stroke:0.1px currentColor;">30.00</div>
<div class="t" style="left:1121.60px;top:482.24px;font-size:10px;color:#333;">0</div>
<div class="t" style="left:1121.70px;top:302.27px;font-size:10.2px;color:#333;transform:scaleX(0.7667);">5</div>
</body></html>
